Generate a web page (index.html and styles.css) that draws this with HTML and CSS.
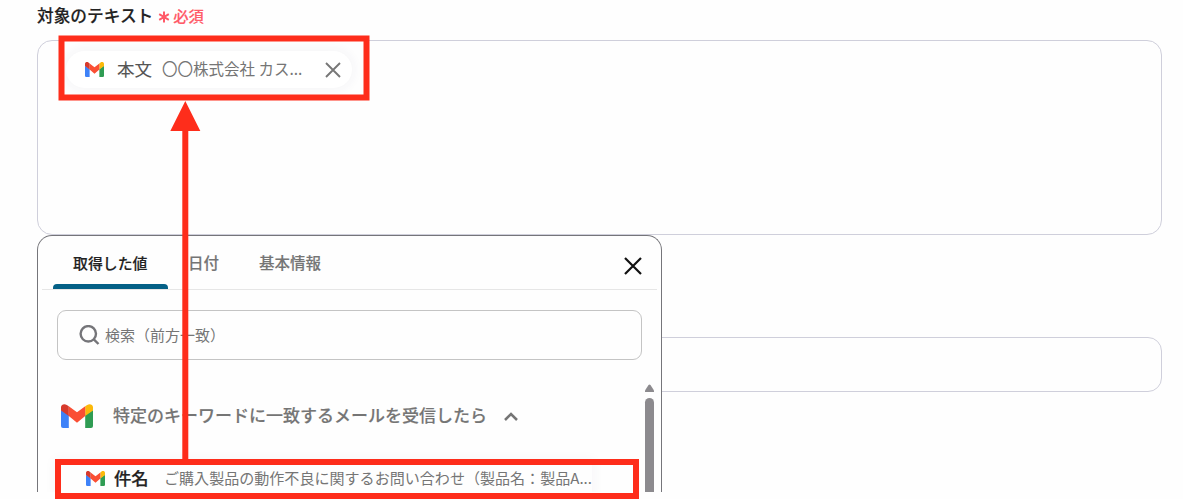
FILE: index.html
```html
<!DOCTYPE html>
<html lang="ja">
<head>
  <meta charset="UTF-8" />
  <title>対象のテキスト</title>
  <link rel="stylesheet" href="styles.css">
</head>
<body>
  <svg class="defs" width="0" height="0">
    <symbol id="gmail" viewBox="0 0 32 24" preserveAspectRatio="none">
      <path fill="#3e82f8" d="M0 6l7.800 5V24H2A2 2 0 0 1 0 22z"/>
      <path fill="#2f9c53" d="M32 6l-7.800 5V24H30a2 2 0 0 0 2-2z"/>
      <path fill="#fbb90a" d="M24.200 2.200V12L32 6.500V3.300C32 .3 28.500-.6 26.200.9z"/>
      <path fill="#fa4f34" d="M7.800 12V2.200L16 8.200l8.200-6V12L16 18.800z"/>
      <path fill="#d73a2c" d="M0 3.300V6.500l7.800 5.500V2.200L5.800.9C3.500-.6 0 .3 0 3.300z"/>
    </symbol>
  </svg>

  <div class="form">
    <div class="label">対象のテキスト
      <svg class="asterisk" viewBox="0 0 12 12"><path d="M6 .5v11M1.200 3.200l9.600 5.600M10.800 3.200L1.200 8.800"/></svg>
      <span class="required">必須</span>
    </div>
    <div class="textarea">
      <div class="chip">
        <svg class="mail"><use href="#gmail"/></svg>
        <span class="chip-name">本文</span>
        <span class="chip-value">〇〇株式会社 カス...</span>
        <svg class="chip-close" viewBox="0 0 16 16"><path d="M1 1l14 14M15 1L1 15"/></svg>
      </div>
    </div>
    <div class="input"></div>
  </div>

  <div class="popup">
    <div class="tabs">
      <div class="tab active">取得した値</div>
      <div class="tab">日付</div>
      <div class="tab">基本情報</div>
      <svg class="popup-close" viewBox="0 0 18 18"><path d="M1 1l16 16M17 1L1 17"/></svg>
    </div>
    <div class="search">
      <svg class="search-icon" viewBox="0 0 20 20"><circle cx="8.800" cy="8.800" r="7.700"/><path d="M14.300 14.300l4.700 4.700"/></svg>
      <span>検索（前方一致）</span>
    </div>
    <div class="list">
      <div class="items">
        <div class="group">
          <svg class="mail-big"><use href="#gmail"/></svg>
          <span>特定のキーワードに一致するメールを受信したら</span>
          <svg class="chevron" viewBox="0 0 14 9"><path d="M1 8l6-6 6 6"/></svg>
        </div>
        <div class="item">
          <svg class="mail"><use href="#gmail"/></svg>
          <span class="item-name">件名</span>
          <span class="item-value">ご購入製品の動作不良に関するお問い合わせ（製品名：製品A...</span>
        </div>
      </div>
      <div class="scrollbar">
        <svg class="scroll-up" viewBox="0 0 9 8"><path d="M3.500 1Q4.500 0 5.500 1L9 6.500V8H0V6.500z"/></svg>
        <div class="thumb"></div>
      </div>
    </div>
  </div>

  <svg class="marks" viewBox="0 0 1183 499">
    <rect x="61.500" y="38.500" width="305" height="59"/>
    <rect x="58" y="462" width="578" height="34"/>
    <path d="M185.300 460V128"/>
    <polygon points="185.300,101 200.300,131 170.300,131"/>
  </svg>
</body>
</html>
```
FILE: styles.css
```css
* {
  box-sizing: border-box;
}
body {
  position: relative;
  margin: 0;
  width: 1183px;
  height: 499px;
  overflow: hidden;
  background: #fefefe;
  font-family: "Noto Sans CJK JP", sans-serif;
  color: #757575;
  white-space: nowrap;
}
svg {
  display: block;
  flex: none;
  fill: none;
}
.defs {
  position: absolute;
}
.form {
  padding: 3px 21px 0 37px;
}
.label {
  display: flex;
  align-items: center;
  height: 24px;
  font-size: 16.7px;
  font-weight: 500;
  color: #222;
  -webkit-text-stroke: 0.15px;
}
.asterisk {
  width: 12px;
  height: 12px;
  margin: 3px 3px 0 5px;
  stroke: #ff5a68;
  stroke-width: 2;
}
.required {
  margin-top: -1px;
  font-size: 15.3px;
  color: #ff5a68;
}
.textarea {
  height: 195px;
  margin-top: 13px;
  padding: 10px 28px;
  border: 1px solid #cfcfdb;
  border-radius: 15px;
}
.chip {
  display: flex;
  align-items: center;
  width: 286px;
  height: 37px;
  padding-left: 19px;
  border-radius: 19px;
  background: #fff;
  box-shadow: 0 0 10px 3px rgba(60, 40, 100, 0.04);
}
.mail {
  width: 19px;
  height: 15px;
}
.chip-name {
  width: 45px;
  margin: -2px 0 0 13px;
  font-size: 17.5px;
  color: #555;
  -webkit-text-stroke: 0.1px;
}
.chip-value {
  width: 163px;
  margin-top: -3px;
  font-size: 15.5px;
}
.chip-close {
  width: 16px;
  height: 16px;
  stroke: #777;
  stroke-width: 1.9;
}
.input {
  height: 55px;
  margin-top: 102px;
  border: 1px solid #cfcfdb;
  border-radius: 14px;
}
.popup {
  position: absolute;
  left: 37px;
  top: 235px;
  width: 625px;
  height: 257px;
  padding: 0 4px;
  overflow: hidden;
  border: 1px solid #75757a;
  border-bottom: none;
  border-radius: 15px 15px 0 0;
  background: #fefefe;
}
.tabs {
  display: flex;
  height: 54px;
  padding-left: 11px;
  border-bottom: 1px solid #e6e6e6;
}
.tab {
  padding: 0 20px;
  line-height: 53px;
  font-size: 15.5px;
  font-weight: 500;
  -webkit-text-stroke: 0.15px;
}
.tab.active {
  position: relative;
  width: 115px;
  font-size: 14.9px;
  line-height: 54px;
  color: #222;
}
.tab.active::after {
  content: "";
  position: absolute;
  left: 0;
  right: 0;
  bottom: 0;
  height: 5px;
  border-radius: 4px 4px 0 0;
  background: #046086;
}
.popup-close {
  width: 18px;
  height: 18px;
  margin: 20.5px 15.5px 0 auto;
  stroke: #111;
  stroke-width: 2.2;
}
.search {
  display: flex;
  align-items: center;
  width: 585px;
  height: 50px;
  margin: 20px 0 0 15px;
  padding-left: 21px;
  border: 1px solid #c4c4c4;
  border-radius: 9px;
  font-size: 15px;
}
.search span {
  margin-top: -2px;
}
.search-icon {
  width: 21px;
  height: 20px;
  margin-right: 5px;
  stroke: #757579;
  stroke-width: 2.4;
}
.list {
  display: flex;
  justify-content: space-between;
  height: 132px;
  padding: 24px 3px 0 14px;
}
.group {
  display: flex;
  align-items: center;
  height: 62px;
  padding-left: 5px;
  font-size: 17px;
  font-weight: 500;
  -webkit-text-stroke: 0.15px;
}
.group span {
  margin-top: -2px;
}
.mail-big {
  width: 32px;
  height: 24px;
  margin: 2px 20px 0 0;
}
.chevron {
  width: 14px;
  height: 9px;
  margin: 2px 0 0 17px;
  stroke: #757575;
  stroke-width: 2.5;
}
.item {
  display: flex;
  align-items: center;
  height: 34px;
  margin-top: 15px;
  padding-left: 30px;
  box-shadow: 0 0 10px 3px rgba(60, 40, 100, 0.03);
}
.item-name {
  width: 49px;
  margin: -1px 0 0 9px;
  font-size: 17.3px;
  font-weight: 500;
  color: #222;
  -webkit-text-stroke: 0.25px;
}
.item-value {
  margin: -2px 0 0 1px;
  font-size: 15.05px;
}
.scroll-up {
  width: 9px;
  height: 8px;
  fill: #8c8a8e;
}
.thumb {
  width: 9px;
  height: 100px;
  margin-top: 6px;
  border-radius: 5px 5px 0 0;
  background: #8c8a8e;
}
.marks {
  position: absolute;
  left: 0;
  top: 0;
  width: 1183px;
  height: 499px;
  stroke: #fe2d1b;
  stroke-width: 6;
}
.marks polygon {
  fill: #fe2d1b;
  stroke: none;
}
```
